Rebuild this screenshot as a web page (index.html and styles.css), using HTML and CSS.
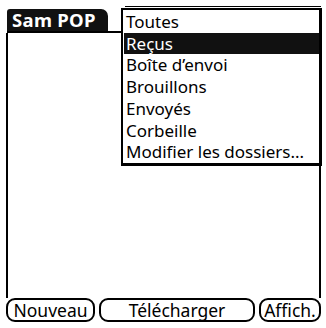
FILE: index.html
```html
<!DOCTYPE html>
<html>
<head>
<meta charset="utf-8">
<link rel="stylesheet" href="styles.css">
</head>
<body>
<div class="screen">
  <div class="titlebar">
    <div class="tab">Sam POP</div>
  </div>
  <div class="content"></div>
  <div class="buttons">
    <div class="btn btn-new">Nouveau</div>
    <div class="btn btn-dl">Télécharger</div>
    <div class="btn btn-view">Affich.</div>
  </div>
  <div class="popup">
    <div class="item">Toutes</div>
    <div class="item selected">Reçus</div>
    <div class="item">Boîte d’envoi</div>
    <div class="item">Brouillons</div>
    <div class="item">Envoyés</div>
    <div class="item">Corbeille</div>
    <div class="item">Modifier les dossiers...</div>
  </div>
</div>
</body>
</html>
```
FILE: styles.css
```css
html, body {
  margin: 0;
  padding: 0;
  background: #fff;
}
.screen {
  position: relative;
  width: 326px;
  height: 328px;
  display: flex;
  flex-direction: column;
  font-family: "Noto Sans", "DejaVu Sans", sans-serif;
  color: #000;
  overflow: hidden;
}
.titlebar {
  margin: 9px 4px 0 7px;
  height: 22px;
  border-bottom: 2px solid #000;
  display: flex;
}
.tab {
  width: 101px;
  height: 22px;
  background: #111;
  color: #fff;
  font-weight: bold;
  font-size: 18.5px;
  line-height: 22px;
  padding-left: 5px;
  box-sizing: border-box;
  border-radius: 3px 7px 0 0;
  letter-spacing: 0.3px;
}
.content {
  flex: 1;
  margin: 0 5px 0 6px;
  border-left: 2px solid #000;
  border-right: 2px solid #000;
}
.buttons {
  display: flex;
  gap: 4px;
  margin: 0 5px 6px 6px;
  height: 24px;
}
.btn {
  border: 2px solid #000;
  border-radius: 9px;
  font-size: 17.5px;
  line-height: 20px;
  text-align: center;
  box-sizing: border-box;
  height: 24px;
}
.btn-new { width: 89px; }
.btn-dl { width: 156px; }
.btn-view { width: 62px; }
.popup {
  position: absolute;
  left: 121px;
  top: 8px;
  width: 201px;
  height: 158px;
  box-sizing: border-box;
  background: #fff;
  border: 2px solid #000;
  border-right-width: 3px;
  border-bottom-width: 3px;
  padding: 1px 0 0 1px;
  display: flex;
  flex-direction: column;
}
.popup::before {
  content: "";
  position: absolute;
  left: 2px;
  right: -2px;
  top: -4px;
  height: 1px;
  background: #000;
}
.item {
  height: 22px;
  line-height: 21px;
  font-size: 17px;
  padding-left: 2px;
  white-space: nowrap;
}
.item.selected {
  background: #111;
  color: #fff;
}
```
